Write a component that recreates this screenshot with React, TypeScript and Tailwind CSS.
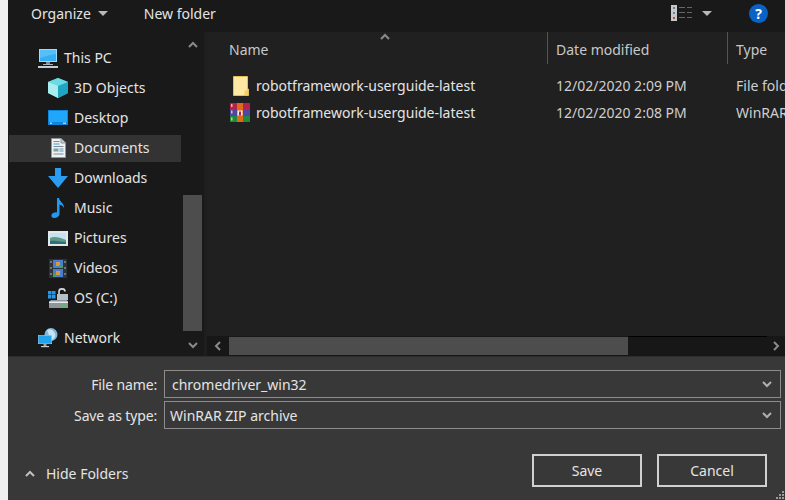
import { ReactNode } from 'react'

// Small Explorer-style icons, drawn by hand
function ThisPcIcon() {
  return (
    <svg width="20" height="19" viewBox="0 0 20 19">
      <rect x="1" y="0" width="18" height="13" fill="#9bdcf8" />
      <rect x="2" y="1" width="16" height="11" fill="#35aef5" />
      <path d="M2 1 H18 V5 C12 6 7 7 2 9 Z" fill="#56bff8" />
      <rect x="8" y="13" width="4" height="2" fill="#7f8a92" />
      <rect x="5" y="15" width="10" height="1" fill="#a9b2b8" />
      <rect x="0" y="17" width="20" height="2" fill="#c4ccd1" />
    </svg>
  )
}

function CubeIcon() {
  return (
    <svg width="20" height="20" viewBox="0 0 20 20">
      <path d="M10 0 L20 4 L20 15 L10 20 L0 15 L0 4 Z" fill="#5fd6e0" />
      <path d="M10 0 L20 4 L10 8 L0 4 Z" fill="#6adbe4" />
      <path d="M10 8 L20 4 L20 15 L10 20 Z" fill="#1fa4c4" />
      <path d="M10 8 L0 4 L0 15 L10 20 Z" fill="#a8eeee" />
    </svg>
  )
}

function DesktopIcon() {
  return (
    <svg width="20" height="16" viewBox="0 0 20 16">
      <rect width="20" height="15" fill="#0f86dc" />
      <rect x="1" y="1" width="18" height="11" fill="#1fa8fb" />
      <rect x="2" y="12.5" width="2" height="1.5" fill="#9ad4f7" />
      <rect x="15" y="12.5" width="3" height="1.5" fill="#9ad4f7" />
    </svg>
  )
}

function DocumentsIcon() {
  return (
    <svg width="15" height="20" viewBox="0 0 15 20">
      <path d="M0.5 0.5 H10 L14.5 5 V19.5 H0.5 Z" fill="#eef1f3" stroke="#8f969b" />
      <path d="M10 0.5 V5 H14.5" fill="#c3ccd3" stroke="#8f969b" />
      <rect x="2.5" y="3" width="6" height="1" fill="#7f8b93" />
      <rect x="2.5" y="5.5" width="6" height="1" fill="#3d9de0" />
      <rect x="2.5" y="8" width="10" height="1" fill="#7f8b93" />
      <rect x="2.5" y="10.5" width="5" height="3" fill="#7aa0a8" />
      <rect x="8.5" y="10.5" width="4" height="1" fill="#7f8b93" />
      <rect x="8.5" y="12.5" width="4" height="1" fill="#3d9de0" />
      <rect x="2.5" y="15.5" width="10" height="1" fill="#7f8b93" />
    </svg>
  )
}

function DownloadsIcon() {
  return (
    <svg width="20" height="20" viewBox="0 0 20 20">
      <path d="M7 0 H13 V8 H20 L10 20 L0 8 H7 Z" fill="#2a9df0" />
    </svg>
  )
}

function MusicIcon() {
  return (
    <svg width="14" height="20" viewBox="0 0 14 20">
      <path d="M6 0 H8 C8.5 4 13.5 5 13 10 C12 7.5 10 7 8.5 6.5 V16 C8.5 18.5 5.5 20 3 20 C1 20 0 18.5 0.5 17 C1 15 4 14 6 14.5 Z" fill="#1e9bf0" />
    </svg>
  )
}

function PicturesIcon() {
  return (
    <svg width="20" height="15" viewBox="0 0 20 15">
      <rect width="20" height="15" fill="#e4e8ea" />
      <rect x="2" y="2" width="16" height="11" fill="#c4e2f2" />
      <path d="M2 7 C6 5 11 6 18 9 V13 H2 Z" fill="#5f9a86" />
      <path d="M2 10 C8 9 12 11 18 11 V13 H2 Z" fill="#2e6f7e" />
    </svg>
  )
}

function VideosIcon() {
  return (
    <svg width="18" height="19" viewBox="0 0 18 19">
      <rect width="18" height="19" fill="#2f3336" />
      <rect x="4" y="1" width="10" height="8" fill="#4a7fcf" />
      <rect x="4" y="10" width="10" height="8" fill="#4a7fcf" />
      <rect x="7" y="3" width="4" height="4" fill="#d89a3a" />
      <rect x="7" y="12" width="4" height="4" fill="#d89a3a" />
      <rect x="10" y="6" width="4" height="3" fill="#3fa35a" />
      <rect x="4" y="15" width="3" height="3" fill="#3fa35a" />
      <rect x="1" y="2" width="2" height="2" fill="#70777c" />
      <rect x="1" y="8" width="2" height="2" fill="#70777c" />
      <rect x="1" y="14" width="2" height="2" fill="#70777c" />
      <rect x="15" y="2" width="2" height="2" fill="#70777c" />
      <rect x="15" y="8" width="2" height="2" fill="#70777c" />
      <rect x="15" y="14" width="2" height="2" fill="#70777c" />
    </svg>
  )
}

function DriveIcon() {
  return (
    <svg width="20" height="20" viewBox="0 0 20 20">
      <rect x="0" y="3" width="3.5" height="3.5" fill="#1e9bf0" />
      <rect x="4" y="3" width="3.5" height="3.5" fill="#1e9bf0" />
      <rect x="0" y="7" width="3.5" height="3.5" fill="#1e9bf0" />
      <rect x="4" y="7" width="3.5" height="3.5" fill="#1e9bf0" />
      <path d="M11 6 V3.5 C11 0 17 0 17 3.5" fill="none" stroke="#d8dcdf" strokeWidth="1.6" />
      <rect x="9" y="6" width="11" height="6" fill="#b9c0c5" />
      <path d="M3 12 H19 L20 14 V20 H1 V14 Z" fill="#8f969b" />
      <rect x="1" y="13.5" width="19" height="1.5" fill="#e8ebed" />
      <rect x="14" y="16.5" width="3" height="2" fill="#3fd04a" />
    </svg>
  )
}

function NetworkIcon() {
  return (
    <svg width="20" height="20" viewBox="0 0 20 20">
      <circle cx="13" cy="6.5" r="6.5" fill="#7fb6dc" />
      <path d="M9 2 C12 0 16 2 17 6 C18 8 16 11 14 12 C12 9 10 6 9 2 Z" fill="#c6e4f3" />
      <rect x="0.3" y="7.3" width="13.4" height="8.4" fill="#22a3ee" stroke="#8ad6fa" strokeWidth="0.6" />
      <rect x="5.5" y="16" width="3" height="2" fill="#98a5ad" />
      <rect x="3" y="18" width="8" height="1.2" fill="#c2cbd0" />
    </svg>
  )
}

function FolderIcon() {
  return (
    <svg width="16" height="20" viewBox="0 0 16 20">
      <path d="M0.5 0.5 H14.5 V13 H15.5 V19.5 H0.5 Z" fill="#fde9a4" stroke="#e2bd55" />
      <path d="M11.5 19 V15 L14.5 13.5 H15 V19 Z" fill="#f3cd62" />
    </svg>
  )
}

function RarIcon() {
  return (
    <svg width="20" height="19" viewBox="0 0 20 19">
      <rect width="20" height="6" fill="#b5214f" />
      <rect y="6" width="20" height="7" fill="#4e47a8" />
      <rect y="13" width="20" height="6" fill="#1f8a3d" />
      <rect x="7" width="6" height="19" fill="#e06a1c" />
      <rect x="7.5" y="7.5" width="5" height="5" fill="#f1ede4" />
      <rect x="9" y="8.5" width="2" height="4" fill="#b5214f" />
      <rect x="1" y="1" width="1.5" height="3" fill="#e7c27a" />
      <rect x="1" y="7.5" width="1.5" height="3" fill="#e7c27a" />
      <rect x="1" y="14.5" width="1.5" height="3" fill="#e7c27a" />
    </svg>
  )
}

function ViewIcon() {
  return (
    <svg width="21" height="16" viewBox="0 0 21 16">
      <rect x="0" y="0" width="6" height="16" fill="#c8c8c8" />
      <rect x="2" y="2" width="2" height="2" fill="#6a7a9a" />
      <rect x="2" y="7" width="2" height="2" fill="#5a80c0" />
      <rect x="2" y="12" width="2" height="2" fill="#c04a4a" />
      <rect x="8" y="2" width="6" height="1" fill="#666" />
      <rect x="16" y="2" width="5" height="1" fill="#666" />
      <rect x="8" y="7" width="6" height="1" fill="#666" />
      <rect x="16" y="7" width="5" height="1" fill="#666" />
      <rect x="8" y="12" width="6" height="1" fill="#666" />
      <rect x="16" y="12" width="5" height="1" fill="#666" />
    </svg>
  )
}

function TriangleDown() {
  return (
    <svg width="10" height="5" viewBox="0 0 10 5" className="block">
      <path d="M0 0 H10 L5 5 Z" fill="#b8b8b8" />
    </svg>
  )
}

function Chevron({ dir, color = '#8a8a8a' }: { dir: 'up' | 'down' | 'left' | 'right'; color?: string }) {
  const d = {
    up: 'M2 8 L6 4 L10 8',
    down: 'M2 4 L6 8 L10 4',
    left: 'M8 2 L4 6 L8 10',
    right: 'M4 2 L8 6 L4 10',
  }[dir]
  return (
    <svg width="12" height="12" viewBox="0 0 12 12" className="block">
      <path d={d} fill="none" stroke={color} strokeWidth="2" />
    </svg>
  )
}

interface NavRow {
  label: string
  icon: ReactNode
  indent?: boolean
  active?: boolean
}

const navRows: NavRow[] = [
  { label: 'This PC', icon: <ThisPcIcon /> },
  { label: '3D Objects', icon: <CubeIcon />, indent: true },
  { label: 'Desktop', icon: <DesktopIcon />, indent: true },
  { label: 'Documents', icon: <DocumentsIcon />, indent: true, active: true },
  { label: 'Downloads', icon: <DownloadsIcon />, indent: true },
  { label: 'Music', icon: <MusicIcon />, indent: true },
  { label: 'Pictures', icon: <PicturesIcon />, indent: true },
  { label: 'Videos', icon: <VideosIcon />, indent: true },
  { label: 'OS (C:)', icon: <DriveIcon />, indent: true },
]

function NavItem({ row }: { row: NavRow }) {
  return (
    <div className={`relative flex h-[30px] items-center gap-[6px] ${row.indent ? 'pl-[40px]' : 'pl-[30px]'}`}>
      {row.active && <div className="absolute bottom-[1px] left-[1px] right-[2px] top-[2px] bg-[#333333]" />}
      <div className="relative flex w-[20px] justify-center">{row.icon}</div>
      <span className="relative pb-[2px]">{row.label}</span>
    </div>
  )
}

const files = [
  { name: 'robotframework-userguide-latest', date: '12/02/2020 2:09 PM', type: 'File folder', icon: <FolderIcon />, pad: 'pr-[7px]' },
  { name: 'robotframework-userguide-latest', date: '12/02/2020 2:08 PM', type: 'WinRAR ZIP archive', icon: <RarIcon />, pad: 'pr-[6px]' },
]

export default function App() {
  return (
    <div className="flex h-[500px] w-[785px] overflow-hidden bg-[#f0f0f0] pl-[8px] font-['Noto_Sans',sans-serif] text-[14px] text-[#e4e4e4]">
      <div className="flex min-w-0 flex-1 flex-col">
        {/* Toolbar */}
        <div className="flex h-[32px] items-center bg-[#191919] pb-[6px] pl-[23px] pr-[17px]">
          <span>Organize</span>
          <span className="ml-[7px]"><TriangleDown /></span>
          <span className="ml-[36px]">New folder</span>
          <div className="ml-auto flex items-center">
            <ViewIcon />
            <span className="ml-[10px]"><TriangleDown /></span>
            <div className="ml-[37px] flex h-[19px] w-[19px] items-center justify-center rounded-full bg-[#0a63c4] text-[14px] font-bold text-white">?</div>
          </div>
        </div>

        <div className="flex h-[324px]">
          {/* Navigation pane */}
          <div className="flex w-[196px] bg-[#191919]">
            <div className="w-[175px] pt-[11px]">
              {navRows.map(row => (
                <NavItem key={row.label} row={row} />
              ))}
              <div className="mt-[10px]">
                <NavItem row={{ label: 'Network', icon: <NetworkIcon /> }} />
              </div>
            </div>
            <div className="flex w-[19px] flex-col items-center">
              <div className="mt-[7px]"><Chevron dir="up" /></div>
              <div className="mt-[144px] h-[136px] w-[19px] bg-[#4d4d4d]" />
              <div className="mt-[8px]"><Chevron dir="down" /></div>
            </div>
          </div>
          <div className="w-[3px] bg-[#1e1e1e]" />

          {/* File list */}
          <div className="relative flex min-w-0 flex-1 flex-col bg-[#202020]">
            <div className="absolute left-[172px] top-[-1px]"><Chevron dir="up" /></div>
            <div className="grid h-[32px] grid-cols-[340px_180px_58px] text-[#c8c8c8]">
              <div className="pl-[22px] pt-[7px]">Name</div>
              <div className="border-l border-[#555555] pl-[8px] pt-[7px]">Date modified</div>
              <div className="border-l border-[#555555] pl-[8px] pt-[7px]">Type</div>
            </div>
            <div className="flex-1 pt-[8px]">
              {files.map((f, i) => (
                <div key={i} className="grid h-[27px] grid-cols-[340px_180px_58px] items-center">
                  <div className="flex items-center">
                    <div className={`flex w-[49px] justify-end ${f.pad}`}>{f.icon}</div>
                    <span className="whitespace-nowrap">{f.name}</span>
                  </div>
                  <div className="whitespace-nowrap pl-[9px] text-[#cfcfcf]">{f.date}</div>
                  <div className="overflow-hidden whitespace-nowrap pl-[9px] text-[#cfcfcf]">{f.type}</div>
                </div>
              ))}
            </div>
            {/* Horizontal scrollbar */}
            <div className="flex h-[20px] items-center bg-[#171717]">
              <div className="flex w-[22px] justify-center"><Chevron dir="left" /></div>
              <div className="h-[18px] w-[399px] bg-[#4d4d4d]" />
              <div className="h-full flex-1 border-t border-black" />
              <div className="flex w-[18px] justify-center"><Chevron dir="right" /></div>
            </div>
          </div>
        </div>

        {/* Save controls */}
        <div className="relative flex flex-1 flex-col border-t border-[#2c2c2c] bg-[#383838] pr-[4px] pt-[13px]">
          <div className="flex h-[28px] items-center">
            <label className="w-[149px] text-right tracking-[-0.15px]">File name:</label>
            <div className="ml-[7px] flex h-full flex-1 items-center justify-between border border-[#8c8c8c] pl-[7px] pr-[7px]">
              <span>chromedriver_win32</span>
              <Chevron dir="down" color="#b0b0b0" />
            </div>
          </div>
          <div className="mt-[3px] flex h-[28px] items-center">
            <label className="w-[149px] text-right tracking-[-0.15px]">Save as type:</label>
            <div className="ml-[7px] flex h-full flex-1 items-center justify-between border border-[#8c8c8c] pl-[5px] pr-[7px]">
              <span>WinRAR ZIP archive</span>
              <Chevron dir="down" color="#b0b0b0" />
            </div>
          </div>
          <div className="mt-[25px] flex items-start pr-[14px]">
            <div className="mt-[9px] flex items-center pl-[16px]">
              <Chevron dir="up" color="#c0c0c0" />
              <span className="ml-[10px]">Hide Folders</span>
            </div>
            <button className="ml-auto h-[33px] w-[110px] border-2 border-[#d0d0d0] text-[14px]">Save</button>
            <button className="ml-[15px] h-[33px] w-[110px] border-2 border-[#d0d0d0] text-[14px]">Cancel</button>
          </div>
          {/* Resize grip */}
          <div className="absolute bottom-[1px] right-[1px] grid grid-cols-3 gap-[1px]">
            <span /><span /><span className="h-[2px] w-[2px] bg-[#9a9a9a]" />
            <span /><span className="h-[2px] w-[2px] bg-[#9a9a9a]" /><span className="h-[2px] w-[2px] bg-[#9a9a9a]" />
            <span className="h-[2px] w-[2px] bg-[#9a9a9a]" /><span className="h-[2px] w-[2px] bg-[#9a9a9a]" /><span className="h-[2px] w-[2px] bg-[#9a9a9a]" />
          </div>
        </div>
      </div>
    </div>
  )
}
